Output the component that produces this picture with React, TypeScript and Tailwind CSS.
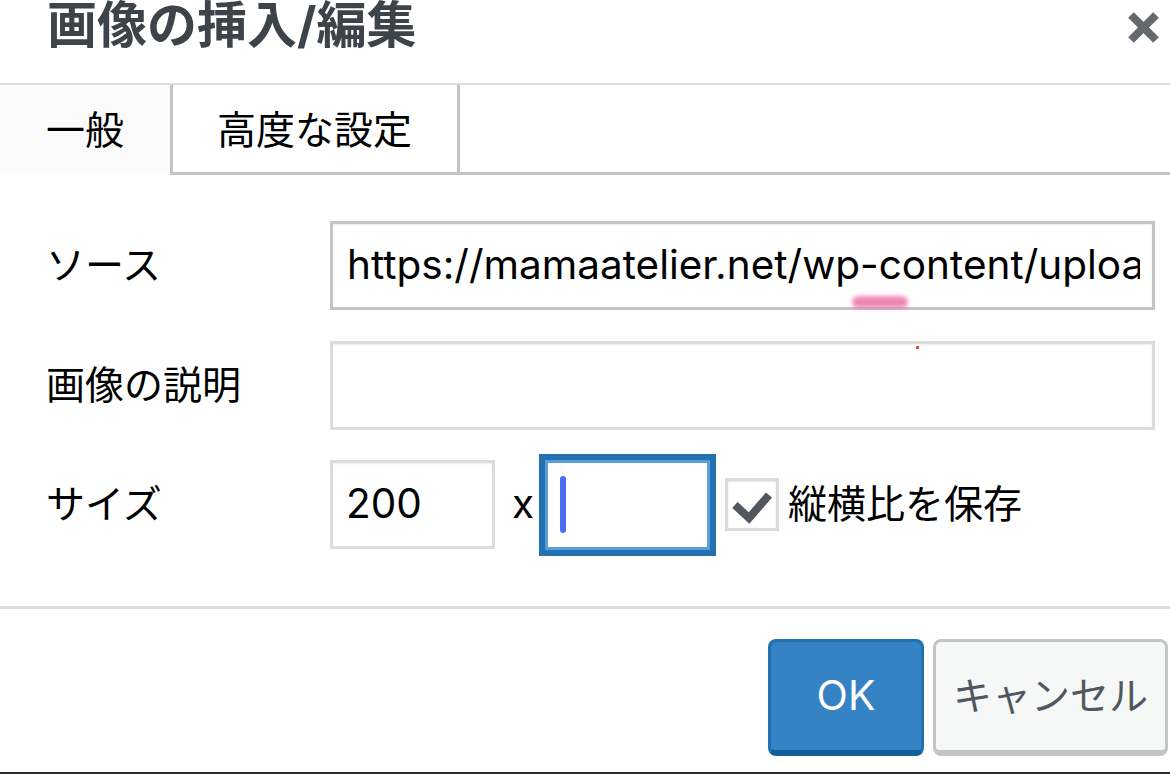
import React from "react";

const FONT = { fontFamily: 'Inter, "Noto Sans CJK JP", sans-serif' };

export default function App() {
  return (
    <div className="w-[1170px] h-[774px] bg-[#2b2b2b] overflow-hidden flex flex-col" style={FONT}>
      <div className="h-[772px] bg-white flex flex-col shrink-0">
        {/* Header */}
        <div className="h-[85px] border-b-2 border-[#dcdcde] flex justify-between shrink-0">
          <div className="pl-[47px] pt-[1px] text-[50px] leading-[48px] font-bold text-[#3c434a] whitespace-nowrap">画像の挿入/編集</div>
          <div className="pt-[10px] pr-[9px]">
            <svg width="35" height="35" viewBox="0 0 35 35">
              <path d="M5 5 L30 30 M30 5 L5 30" stroke="#646970" strokeWidth="8" strokeLinecap="butt" />
            </svg>
          </div>
        </div>
        {/* Tabs */}
        <div className="h-[90px] flex shrink-0 text-[39px] text-black">
          <div className="w-[173px] bg-[#fbfbfb] border-r-[3px] border-[#c3c4c7] flex items-center pl-[46px]">一般</div>
          <div className="border-r-[3px] border-b-[3px] border-[#c3c4c7] flex items-center pl-[44px] pr-[45px] pt-[3px]">高度な設定</div>
          <div className="flex-1 border-b-[3px] border-[#c3c4c7]"></div>
        </div>
        {/* Body */}
        <div className="pt-[46px] flex flex-col text-[39px] text-black">
          <div className="flex items-center h-[89px]">
            <div className="w-[330px] pl-[46px]">ソース</div>
            <div className="relative w-[825px] h-[89px] border-[3px] border-[#c3c4c7] shadow-[inset_0_1px_2px_rgba(0,0,0,0.07)] flex items-center pl-[14px] pr-[12px] text-[40.5px]">
              <div className="flex-1 overflow-hidden whitespace-nowrap">https://mamaatelier.net/wp-content/uploads</div>
              <div className="absolute left-[519px] top-[72px] w-[56px] h-[12px] rounded-full bg-[#ea6aa3] blur-[2px] opacity-80"></div>
            </div>
          </div>
          <div className="flex items-center h-[89px] mt-[31px]">
            <div className="w-[330px] pl-[46px]">画像の説明</div>
            <div className="relative w-[825px] h-[89px] border-[3px] border-[#dcdcde] shadow-[inset_0_1px_2px_rgba(0,0,0,0.07)]">
              <div className="absolute left-[583px] top-[2px] w-[3px] h-[3px] bg-[#e8502f]"></div>
            </div>
          </div>
          <div className="flex items-center h-[89px] mt-[30px]">
            <div className="w-[330px] pl-[46px]">サイズ</div>
            <div className="w-[165px] h-[89px] border-[3px] border-[#dcdcde] shadow-[inset_0_1px_2px_rgba(0,0,0,0.07)] flex items-center pl-[13px] text-[40.5px]">200</div>
            <div className="ml-[17px] mr-[11px] text-[40.5px]">x</div>
            <div className="w-[165px] h-[90px] border-[3px] border-[#5b9dd9] shadow-[0_0_0_6px_#2271b1] flex items-center pl-[12px]">
              <div className="w-[6px] h-[57px] rounded-full bg-[#4a6cf7]"></div>
            </div>
            <div className="ml-[15px] w-[54px] h-[53px] border-[3px] border-[#dcdcde] bg-white shadow-[inset_0_1px_2px_rgba(0,0,0,0.1)] flex items-center justify-center">
              <svg width="48" height="47" viewBox="0 0 48 47">
                <path d="M7 24 L21 37 L41 14" stroke="#50575e" strokeWidth="8" fill="none" strokeLinejoin="miter" />
              </svg>
            </div>
            <div className="ml-[9px]">縦横比を保存</div>
          </div>
        </div>
        {/* Footer */}
        <div className="mt-[57px] border-t-[3px] border-[#dcdcde] pt-[30px] flex justify-end gap-[9px] pr-[2px]">
          <div className="w-[156px] h-[117px] rounded-[8px] bg-[#3582c4] border-[3px] border-b-[6px] border-[#2271b1] border-b-[#135e96] flex items-center justify-center text-white text-[41px]">OK</div>
          <div className="w-[235px] h-[117px] rounded-[8px] bg-[#f6f7f7] border-[3px] border-b-[6px] border-[#c3c4c7] flex items-center justify-center text-[#50575e] text-[39px]">キャンセル</div>
        </div>
      </div>
    </div>
  );
}
